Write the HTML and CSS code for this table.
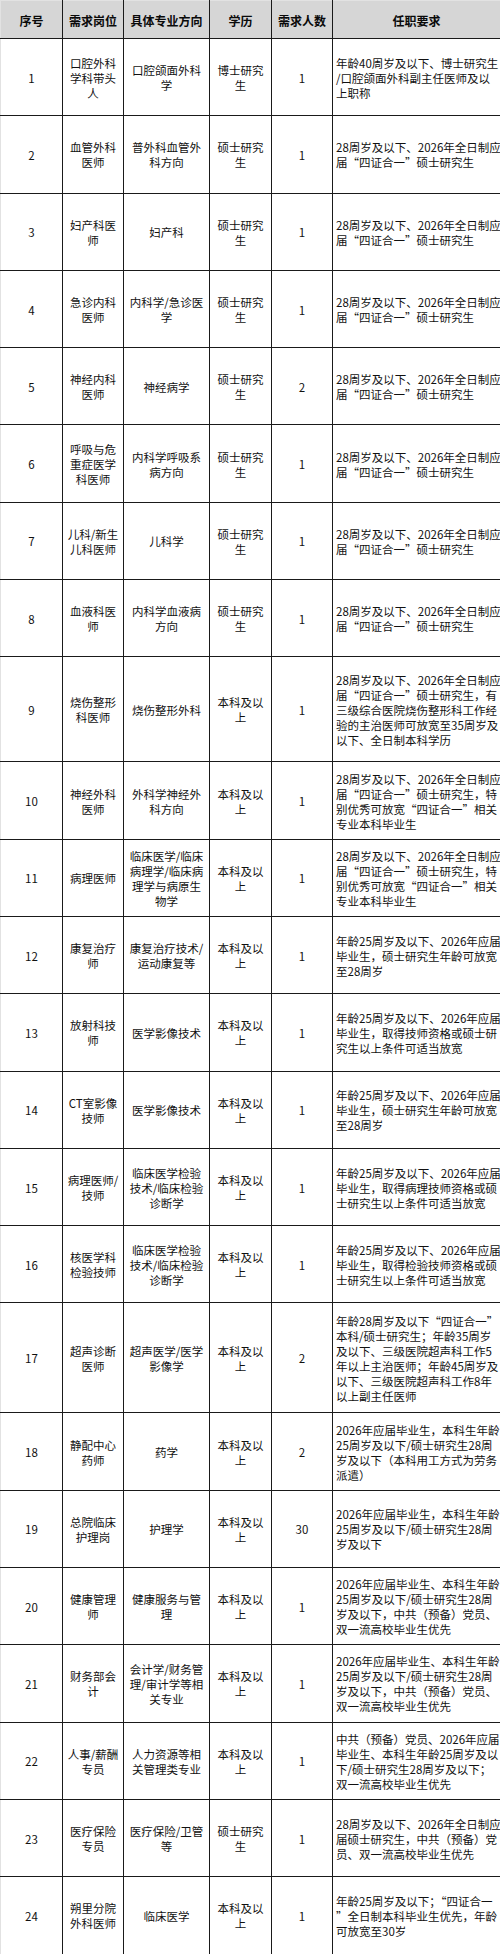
FILE: index.html
```html
<!DOCTYPE html>
<html lang="zh-CN">
<head>
<meta charset="utf-8">
<title>招聘岗位表</title>
<link rel="stylesheet" href="styles.css">
</head>
<body>
<table class="jobs">
  <colgroup>
    <col class="c-no"><col class="c-post"><col class="c-major"><col class="c-edu"><col class="c-num"><col class="c-req">
  </colgroup>
  <thead>
    <tr><th>序号</th><th>需求岗位</th><th>具体专业方向</th><th>学历</th><th>需求人数</th><th>任职要求</th></tr>
  </thead>
  <tbody>
    <tr><td>1</td><td>口腔外科<br>学科带头<br>人</td><td>口腔颌面外科<br>学</td><td>博士研究<br>生</td><td>1</td><td class="req">年龄40周岁及以下、博士研究生<br>/口腔颌面外科副主任医师及以<br>上职称</td></tr>
    <tr><td>2</td><td>血管外科<br>医师</td><td>普外科血管外<br>科方向</td><td>硕士研究<br>生</td><td>1</td><td class="req">28周岁及以下、2026年全日制应<br>届“四证合一”硕士研究生</td></tr>
    <tr><td>3</td><td>妇产科医<br>师</td><td>妇产科</td><td>硕士研究<br>生</td><td>1</td><td class="req">28周岁及以下、2026年全日制应<br>届“四证合一”硕士研究生</td></tr>
    <tr><td>4</td><td>急诊内科<br>医师</td><td>内科学/急诊医<br>学</td><td>硕士研究<br>生</td><td>1</td><td class="req">28周岁及以下、2026年全日制应<br>届“四证合一”硕士研究生</td></tr>
    <tr><td>5</td><td>神经内科<br>医师</td><td>神经病学</td><td>硕士研究<br>生</td><td>2</td><td class="req">28周岁及以下、2026年全日制应<br>届“四证合一”硕士研究生</td></tr>
    <tr><td>6</td><td>呼吸与危<br>重症医学<br>科医师</td><td>内科学呼吸系<br>病方向</td><td>硕士研究<br>生</td><td>1</td><td class="req">28周岁及以下、2026年全日制应<br>届“四证合一”硕士研究生</td></tr>
    <tr><td>7</td><td>儿科/新生<br>儿科医师</td><td>儿科学</td><td>硕士研究<br>生</td><td>1</td><td class="req">28周岁及以下、2026年全日制应<br>届“四证合一”硕士研究生</td></tr>
    <tr><td>8</td><td>血液科医<br>师</td><td>内科学血液病<br>方向</td><td>硕士研究<br>生</td><td>1</td><td class="req">28周岁及以下、2026年全日制应<br>届“四证合一”硕士研究生</td></tr>
    <tr class="r5"><td>9</td><td>烧伤整形<br>科医师</td><td>烧伤整形外科</td><td>本科及以<br>上</td><td>1</td><td class="req">28周岁及以下、2026年全日制应<br>届“四证合一”硕士研究生，有<br>三级综合医院烧伤整形科工作经<br>验的主治医师可放宽至35周岁及<br>以下、全日制本科学历</td></tr>
    <tr><td>10</td><td>神经外科<br>医师</td><td>外科学神经外<br>科方向</td><td>本科及以<br>上</td><td>1</td><td class="req">28周岁及以下、2026年全日制应<br>届“四证合一”硕士研究生，特<br>别优秀可放宽“四证合一”相关<br>专业本科毕业生</td></tr>
    <tr><td>11</td><td>病理医师</td><td>临床医学/临床<br>病理学/临床病<br>理学与病原生<br>物学</td><td>本科及以<br>上</td><td>1</td><td class="req">28周岁及以下、2026年全日制应<br>届“四证合一”硕士研究生，特<br>别优秀可放宽“四证合一”相关<br>专业本科毕业生</td></tr>
    <tr><td>12</td><td>康复治疗<br>师</td><td>康复治疗技术/<br>运动康复等</td><td>本科及以<br>上</td><td>1</td><td class="req">年龄25周岁及以下、2026年应届<br>毕业生，硕士研究生年龄可放宽<br>至28周岁</td></tr>
    <tr><td>13</td><td>放射科技<br>师</td><td>医学影像技术</td><td>本科及以<br>上</td><td>1</td><td class="req">年龄25周岁及以下、2026年应届<br>毕业生，取得技师资格或硕士研<br>究生以上条件可适当放宽</td></tr>
    <tr><td>14</td><td>CT室影像<br>技师</td><td>医学影像技术</td><td>本科及以<br>上</td><td>1</td><td class="req">年龄25周岁及以下、2026年应届<br>毕业生，硕士研究生年龄可放宽<br>至28周岁</td></tr>
    <tr><td>15</td><td>病理医师/<br>技师</td><td>临床医学检验<br>技术/临床检验<br>诊断学</td><td>本科及以<br>上</td><td>1</td><td class="req">年龄25周岁及以下、2026年应届<br>毕业生，取得病理技师资格或硕<br>士研究生以上条件可适当放宽</td></tr>
    <tr><td>16</td><td>核医学科<br>检验技师</td><td>临床医学检验<br>技术/临床检验<br>诊断学</td><td>本科及以<br>上</td><td>1</td><td class="req">年龄25周岁及以下、2026年应届<br>毕业生，取得检验技师资格或硕<br>士研究生以上条件可适当放宽</td></tr>
    <tr class="r6"><td>17</td><td>超声诊断<br>医师</td><td>超声医学/医学<br>影像学</td><td>本科及以<br>上</td><td>2</td><td class="req">年龄28周岁及以下“四证合一”<br>本科/硕士研究生；年龄35周岁<br>及以下、三级医院超声科工作5<br>年以上主治医师；年龄45周岁及<br>以下、三级医院超声科工作8年<br>以上副主任医师</td></tr>
    <tr><td>18</td><td>静配中心<br>药师</td><td>药学</td><td>本科及以<br>上</td><td>2</td><td class="req">2026年应届毕业生，本科生年龄<br>25周岁及以下/硕士研究生28周<br>岁及以下（本科用工方式为劳务<br>派遣）</td></tr>
    <tr><td>19</td><td>总院临床<br>护理岗</td><td>护理学</td><td>本科及以<br>上</td><td>30</td><td class="req">2026年应届毕业生，本科生年龄<br>25周岁及以下/硕士研究生28周<br>岁及以下</td></tr>
    <tr><td>20</td><td>健康管理<br>师</td><td>健康服务与管<br>理</td><td>本科及以<br>上</td><td>1</td><td class="req">2026年应届毕业生、本科生年龄<br>25周岁及以下/硕士研究生28周<br>岁及以下，中共（预备）党员、<br>双一流高校毕业生优先</td></tr>
    <tr><td>21</td><td>财务部会<br>计</td><td>会计学/财务管<br>理/审计学等相<br>关专业</td><td>本科及以<br>上</td><td>1</td><td class="req">2026年应届毕业生、本科生年龄<br>25周岁及以下/硕士研究生28周<br>岁及以下，中共（预备）党员、<br>双一流高校毕业生优先</td></tr>
    <tr><td>22</td><td>人事/薪酬<br>专员</td><td>人力资源等相<br>关管理类专业</td><td>本科及以<br>上</td><td>1</td><td class="req">中共（预备）党员、2026年应届<br>毕业生、本科生年龄25周岁及以<br>下/硕士研究生28周岁及以下；<br>双一流高校毕业生优先</td></tr>
    <tr><td>23</td><td>医疗保险<br>专员</td><td>医疗保险/卫管<br>等</td><td>硕士研究<br>生</td><td>1</td><td class="req">28周岁及以下、2026年全日制应<br>届硕士研究生，中共（预备）党<br>员、双一流高校毕业生优先</td></tr>
    <tr><td>24</td><td>朔里分院<br>外科医师</td><td>临床医学</td><td>本科及以<br>上</td><td>1</td><td class="req">年龄25周岁及以下；“四证合一<br>”全日制本科毕业生优先，年龄<br>可放宽至30岁</td></tr>
  </tbody>
</table>
</body>
</html>
```

FILE: styles.css
```css
html, body {
  margin: 0;
  padding: 0;
  background: #ffffff;
}

body {
  width: 500px;
  font-family: "Noto Sans CJK SC", "Noto Sans", sans-serif;
  font-size: 11.5px;
  line-height: 15px;
  color: #111111;
}

.jobs {
  width: 500px;
  border-collapse: collapse;
  table-layout: fixed;
}

.c-no { width: 62px; }
.c-post { width: 61px; }
.c-major { width: 86px; }
.c-edu { width: 62px; }
.c-num { width: 61px; }
.c-req { width: 168px; }

.jobs th,
.jobs td {
  border: 1px solid #1a1a1a;
  padding: 2px 0 0;
  text-align: center;
  vertical-align: middle;
  white-space: nowrap;
  overflow: hidden;
}

.jobs thead tr {
  height: 38px;
}

.jobs th {
  background: #d6d6d6;
  border-top-color: #e2e2e2;
  font-size: 12px;
  font-weight: 700;
  color: #0a0a0a;
}

.jobs th:first-child,
.jobs td:first-child {
  border-left-color: #e2e2e2;
}

.jobs tbody tr {
  height: 77.3px;
}

.jobs tbody tr.r5 {
  height: 105px;
}

.jobs tbody tr.r6 {
  height: 110px;
}

.jobs td.req {
  text-align: left;
  padding-left: 3px;
}
```
